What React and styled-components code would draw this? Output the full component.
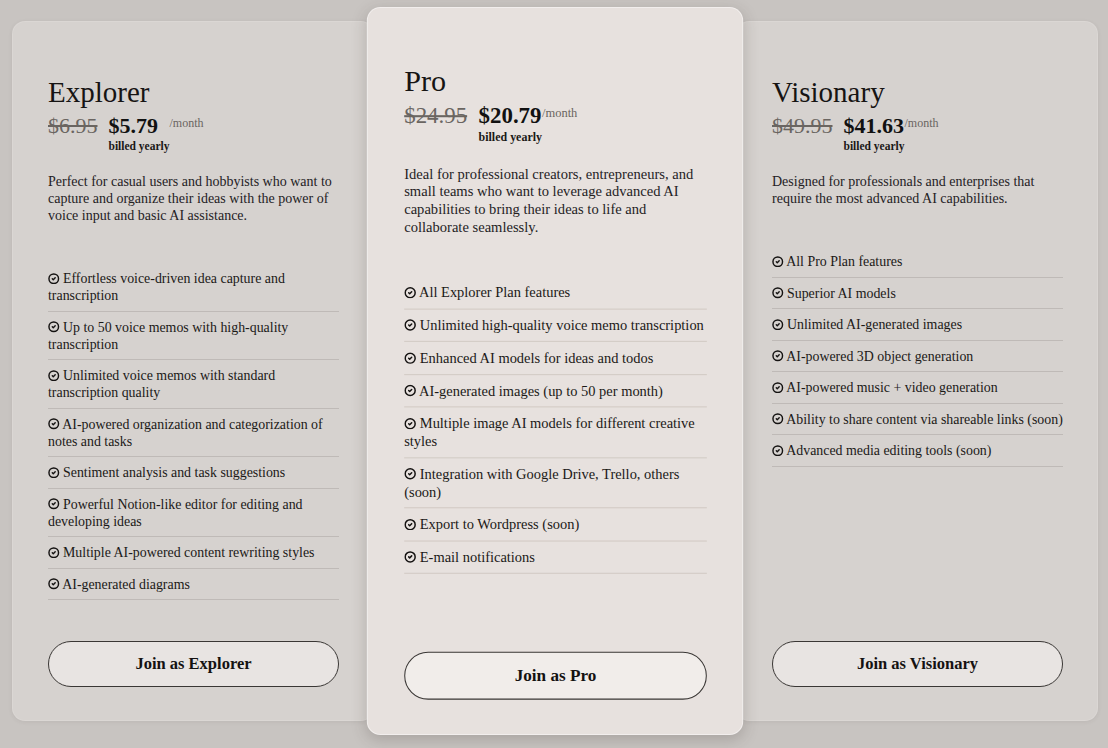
import React from 'react';
import styled, { createGlobalStyle } from 'styled-components';
import { CircleCheck } from 'lucide-react';

const plans = [
  {
    name: "Explorer",
    was: "$6.95",
    price: "$5.79",
    blurb: "Perfect for casual users and hobbyists who want to capture and organize their ideas with the power of voice input and basic AI assistance.",
    features: [
      "Effortless voice-driven idea capture and transcription",
      "Up to 50 voice memos with high-quality transcription",
      "Unlimited voice memos with standard transcription quality",
      "AI-powered organization and categorization of notes and tasks",
      "Sentiment analysis and task suggestions",
      "Powerful Notion-like editor for editing and developing ideas",
      "Multiple AI-powered content rewriting styles",
      "AI-generated diagrams"
    ]
  },
  {
    name: "Pro",
    was: "$24.95",
    price: "$20.79",
    featured: true,
    blurb: "Ideal for professional creators, entrepreneurs, and small teams who want to leverage advanced AI capabilities to bring their ideas to life and collaborate seamlessly.",
    features: [
      "All Explorer Plan features",
      "Unlimited high-quality voice memo transcription",
      "Enhanced AI models for ideas and todos",
      "AI-generated images (up to 50 per month)",
      "Multiple image AI models for different creative styles",
      "Integration with Google Drive, Trello, others (soon)",
      "Export to Wordpress (soon)",
      "E-mail notifications"
    ]
  },
  {
    name: "Visionary",
    was: "$49.95",
    price: "$41.63",
    blurb: "Designed for professionals and enterprises that require the most advanced AI capabilities.",
    features: [
      "All Pro Plan features",
      "Superior AI models",
      "Unlimited AI-generated images",
      "AI-powered 3D object generation",
      "AI-powered music + video generation",
      "Ability to share content via shareable links (soon)",
      "Advanced media editing tools (soon)"
    ]
  }
]

function App() {
  return (
    <React.Fragment>
      <GlobalStyle />
      <Page>
        {plans.map((plan) =>
          <Card key={plan.name} featured={plan.featured}>
            <Title>{plan.name}</Title>
            <PriceRow>
              <OldPrice>{plan.was}</OldPrice>
              <PriceCol>
                <PriceLine>
                  <Price>{plan.price}</Price>
                  <PerMonth>/month</PerMonth>
                </PriceLine>
                <Billed>billed yearly</Billed>
              </PriceCol>
            </PriceRow>
            <Blurb>{plan.blurb}</Blurb>
            <Features>
              {plan.features.map((f, i) =>
                <Feature key={i} featured={plan.featured}>
                  <CheckIcon size={11.5} strokeWidth={3} /> {f}
                </Feature>
              )}
            </Features>
            <JoinButton featured={plan.featured}>Join as {plan.name}</JoinButton>
          </Card>
        )}
      </Page>
    </React.Fragment>
  );
}

const GlobalStyle = createGlobalStyle`
  body {
    margin: 0;
    background: #c8c4c1;
    font-family: "Liberation Serif", "DejaVu Serif", serif;
    color: #1c1a19;
  }
`

const Page = styled.div`
  display: grid;
  grid-template-columns: repeat(3, 362px);
  padding: 21px 10px 27px 12px;
  height: 748px;
  box-sizing: border-box;
`

const Card = styled.div.withConfig({ shouldForwardProp: p => p !== 'featured' })`
  display: flex;
  flex-direction: column;
  height: 700px;
  box-sizing: border-box;
  padding: 54px 34px 33px 35px;
  border-radius: 13px;
  border: 1px solid ${props => props.featured ? "rgba(255,255,255,0.45)" : "rgba(255,255,255,0.12)"};
  background: ${props => props.featured ? "#e7e1de" : "#d6d2cf"};
  box-shadow: ${props => props.featured
    ? "0 4px 14px rgba(60,50,45,0.22)"
    : "0 1px 4px rgba(60,50,45,0.08)"};
  position: relative;
  z-index: ${props => props.featured ? 1 : 0};
  transform: ${props => props.featured ? "scale(1.04)" : "none"};
`

const Title = styled.h2`
  margin: 0;
  font-weight: 400;
  font-size: 29px;
  line-height: 32px;
  color: #161413;
`

const PriceRow = styled.div`
  display: flex;
  align-items: flex-start;
  gap: 11px;
  margin-top: 5px;
`

const OldPrice = styled.span`
  font-size: 22px;
  line-height: 26px;
  color: #6a6561;
  text-decoration: line-through;
  text-decoration-thickness: 1.5px;
`

const PriceCol = styled.div`
  display: flex;
  flex-direction: column;
`

const PriceLine = styled.div`
  display: flex;
  align-items: flex-start;
`

const Price = styled.span`
  min-width: 61px;
  font-size: 22px;
  line-height: 26px;
  font-weight: 700;
  color: #111;
`

const PerMonth = styled.span`
  margin-top: 3px;
  font-size: 12px;
  line-height: 14px;
  color: #6a6561;
`

const Billed = styled.span`
  font-size: 11.5px;
  line-height: 14px;
  font-weight: 700;
  color: #1a1816;
`

const Blurb = styled.p`
  margin: 20px 0 0 0;
  font-size: 14px;
  line-height: 17px;
  color: #24211f;
`

const Features = styled.ul`
  list-style: none;
  margin: 39px 0 0 0;
  padding: 0;
`

const Feature = styled.li.withConfig({ shouldForwardProp: p => p !== 'featured' })`
  padding: 7px 0 6.5px 0;
  font-size: 13.9px;
  line-height: 17px;
  color: #1b1917;
  border-bottom: 1px solid ${props => props.featured ? "#d2cac4" : "#bfbab7"};
`

const CheckIcon = styled(CircleCheck)`
  vertical-align: -1px;
  color: #141211;
`

const JoinButton = styled.button.withConfig({ shouldForwardProp: p => p !== 'featured' })`
  margin-top: auto;
  height: 46px;
  width: 100%;
  border-radius: 23px;
  border: 1px solid #3a3735;
  background: ${props => props.featured ? "#f1edea" : "#e8e4e2"};
  font-family: "Liberation Serif", "DejaVu Serif", serif;
  font-size: 16.5px;
  font-weight: 700;
  color: #141211;
  cursor: pointer;
`

export default App;
